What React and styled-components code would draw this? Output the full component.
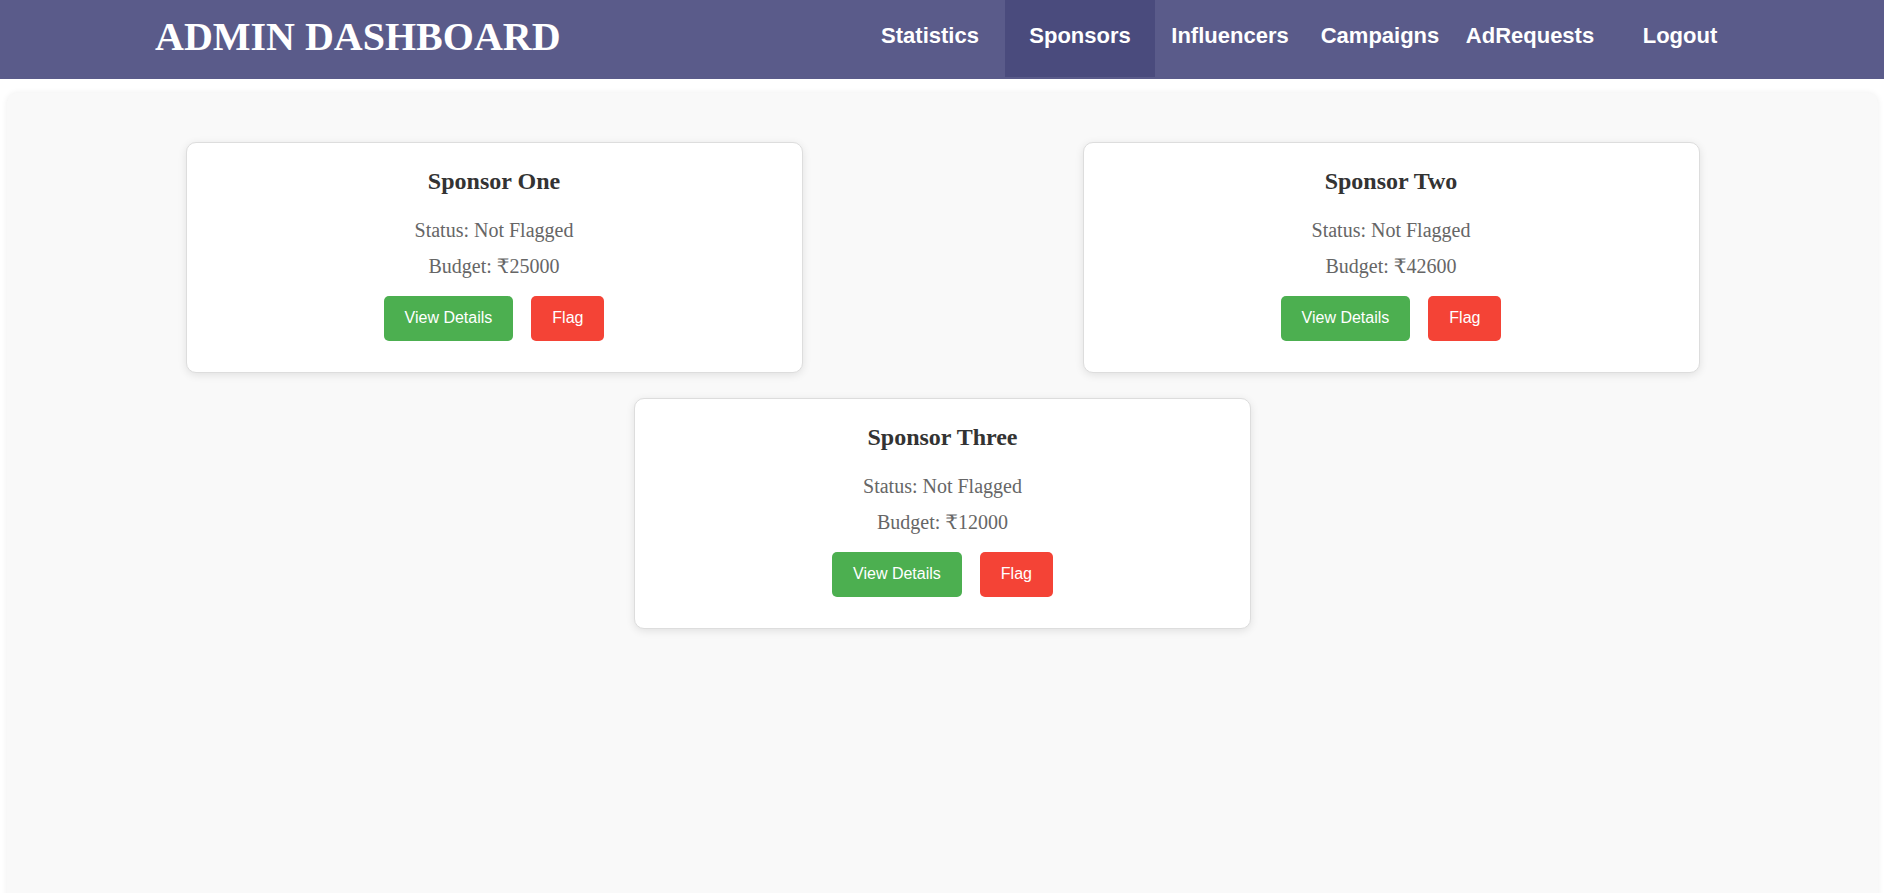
import React from 'react'
import styled, { createGlobalStyle } from 'styled-components'

const GlobalStyle = createGlobalStyle`
  html, body {
    margin: 0;
    padding: 0;
    background: #fff;
    font-family: "Liberation Serif", "DejaVu Serif", serif;
    overflow: hidden;
  }
`

const sponsors = [
  { id: 1, name: 'Sponsor One', flagged: false, budget: 25000 },
  { id: 2, name: 'Sponsor Two', flagged: false, budget: 42600 },
  { id: 3, name: 'Sponsor Three', flagged: false, budget: 12000 }
]

const navItems = ['Statistics', 'Sponsors', 'Influencers', 'Campaigns', 'AdRequests', 'Logout']

export default function App() {
  return (
    <>
      <GlobalStyle />
      <HeaderFrame>
        <Title>ADMIN DASHBOARD</Title>
        <Nav>
          {navItems.map(item => (
            <NavLink key={item} href="#" active={item === 'Sponsors' ? 1 : 0}>
              {item}
            </NavLink>
          ))}
        </Nav>
      </HeaderFrame>
      <Main>
        {sponsors.map(s => (
          <Card key={s.id}>
            <CardTitle>{s.name}</CardTitle>
            <Info>Status: {s.flagged ? 'Flagged' : 'Not Flagged'}</Info>
            <Info last>Budget: ₹{s.budget}</Info>
            <Actions>
              <ActionButton color="#4caf50">View Details</ActionButton>
              <ActionButton color="#f44336">Flag</ActionButton>
            </Actions>
          </Card>
        ))}
      </Main>
    </>
  )
}

const HeaderFrame = styled.header`
  height: 79px;
  background-color: #5a5b8a;
  display: flex;
  align-items: flex-start;
  justify-content: space-between;
  padding: 0 129px 0 155px;
  box-sizing: border-box;
`

const Title = styled.h1`
  margin: 14px 0 0;
  font-family: "Liberation Serif", serif;
  font-size: 40px;
  font-weight: 700;
  line-height: 46px;
  color: #fff;
  white-space: nowrap;
`

const Nav = styled.nav`
  display: flex;
`

const NavLink = styled.a`
  width: 150px;
  height: 77px;
  box-sizing: border-box;
  padding-top: 23px;
  text-align: center;
  font-family: "Liberation Sans", Arial, sans-serif;
  font-size: 22px;
  font-weight: 700;
  line-height: 25px;
  color: #fff;
  text-decoration: none;
  background-color: ${props => (props.active ? '#4a4b7d' : 'transparent')};
  white-space: nowrap;
`

const Main = styled.main`
  margin: 14px 6px 0 7px;
  height: 820px;
  box-sizing: border-box;
  padding-top: 49px;
  background-color: #f9f9f9;
  border-radius: 10px;
  box-shadow: 0 0 6px rgba(0, 0, 0, 0.07);
  display: flex;
  flex-wrap: wrap;
  justify-content: center;
  align-content: flex-start;
  row-gap: 25px;
`

const Card = styled.div`
  width: 617px;
  height: 231px;
  margin: 0 140px;
  box-sizing: border-box;
  padding: 25px 20px 30px;
  background-color: #fff;
  border: 1px solid #ddd;
  border-radius: 10px;
  box-shadow: 0 2px 8px rgba(0, 0, 0, 0.1);
  text-align: center;
`

const CardTitle = styled.h3`
  margin: 0 0 23px;
  font-size: 24px;
  font-weight: 700;
  line-height: 27.6px;
  color: #333;
`

const Info = styled.p`
  margin: 0 0 ${props => (props.last ? '18px' : '13px')};
  font-size: 20px;
  line-height: 23px;
  color: #666;
`

const Actions = styled.div`
  display: flex;
  justify-content: center;
  gap: 18px;
`

const ActionButton = styled.button`
  height: 45px;
  padding: 0 21px;
  border: none;
  border-radius: 5px;
  background-color: ${props => props.color};
  color: #fff;
  font-family: "Liberation Sans", Arial, sans-serif;
  font-size: 16px;
  cursor: pointer;
`
